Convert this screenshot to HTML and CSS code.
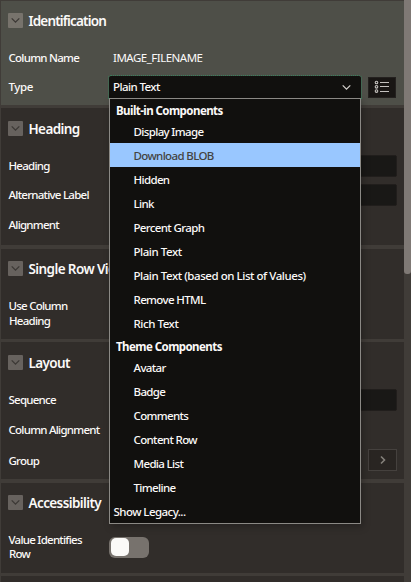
FILE: index.html
```
<!DOCTYPE html>
<html lang="en">
<head>
<meta charset="utf-8">
<title>Property Editor</title>
<link rel="stylesheet" href="styles.css">
</head>
<body>
<svg class="defs" aria-hidden="true"><symbol id="chev" viewBox="0 0 15 15"><path d="M3.7 5.4 7.5 9.2 11.3 5.4"/></symbol></svg>
<div class="panel">
  <main class="groups">
    <section class="group active identification">
      <h2><span class="toggle-icon"><svg><use href="#chev"/></svg></span><span class="t-ident">Identification</span></h2>
      <div class="row"><span class="label">Column Name</span><span class="value">IMAGE_FILENAME</span></div>
      <div class="row type-row"><span class="label">Type</span>
        <div class="select"><span>Plain Text</span><svg><use href="#chev"/></svg>
          <div class="menu">
            <div class="menu-head">Built-in Components</div>
            <div class="builtin">
              <div class="item">Display Image</div>
              <div class="item selected">Download BLOB</div>
              <div class="item">Hidden</div>
              <div class="item">Link</div>
              <div class="item">Percent Graph</div>
              <div class="item wide">Plain Text</div>
              <div class="item wide">Plain Text (based on List of Values)</div>
              <div class="item">Remove HTML</div>
              <div class="item wide">Rich Text</div>
            </div>
            <div class="menu-head theme">Theme Components</div>
            <div class="item">Avatar</div>
            <div class="item">Badge</div>
            <div class="item">Comments</div>
            <div class="item">Content Row</div>
            <div class="item">Media List</div>
            <div class="item">Timeline</div>
            <div class="item legacy">Show Legacy...</div>
          </div>
        </div>
        <button class="list-button" aria-label="Quick pick"><svg viewBox="0 0 16 14"><g class="dots"><circle cx="2.5" cy="2.5" r="1.3"/><circle cx="2.5" cy="6.8" r="1.3"/><circle cx="2.5" cy="11.1" r="1.3"/></g><path d="M6 2.5h9M6 6.5h9M6 11.5h9"/></svg></button>
      </div>
    </section>
    <section class="group heading">
      <h2><span class="toggle-icon"><svg><use href="#chev"/></svg></span><span>Heading</span></h2>
      <div class="row"><span class="label">Heading</span><span class="input"></span></div>
      <div class="row"><span class="label">Alternative Label</span><span class="input"></span></div>
      <div class="row low"><span class="label">Alignment</span></div>
    </section>
    <section class="group single">
      <h2><span class="toggle-icon"><svg><use href="#chev"/></svg></span><span>Single Row View</span></h2>
      <div class="two-line"><span class="label">Use Column<br>Heading</span></div>
    </section>
    <section class="group layout">
      <h2><span class="toggle-icon"><svg><use href="#chev"/></svg></span><span>Layout</span></h2>
      <div class="row"><span class="label">Sequence</span><span class="input"></span></div>
      <div class="row low"><span class="label">Column Alignment</span></div>
      <div class="row group-row"><span class="label">Group</span><button class="next-button" aria-label="Go to group"><svg viewBox="0 0 10 10"><path d="M3 1.5 6.5 5 3 8.5"/></svg></button></div>
    </section>
    <section class="group access">
      <h2><span class="toggle-icon"><svg><use href="#chev"/></svg></span><span>Accessibility</span></h2>
      <div class="two-line tight"><span class="label">Value Identifies<br>Row</span><span class="switch"><span class="knob"></span></span></div>
    </section>
    <section class="group last"></section>
  </main>
  <div class="scrollbar"><div class="thumb"></div></div>
</div>
</body>
</html>
```
FILE: styles.css
```
* { box-sizing: border-box; }
body { margin: 0; background: #fff; font-family: "Noto Sans", "Open Sans", sans-serif; font-size: 11.5px; letter-spacing: -0.5px; color: #fbf9f8; overflow: hidden; }
.defs { position: absolute; width: 0; height: 0; }
.panel { display: flex; width: 411px; height: 582px; overflow: hidden; background: #403c38; }
.groups { width: 404px; padding: 1px 0 0 1px; }
.group { background: #312d2a; padding: 0 7px 0 8px; overflow: hidden; }
.active { background: #4e4f48; overflow: visible; }
.identification { height: 104px; margin-bottom: 3px; }
.heading { height: 137px; margin-bottom: 4px; }
.single { height: 90px; margin-bottom: 3px; }
.layout { height: 137px; margin-bottom: 4px; }
.access { height: 90px; margin-bottom: 3px; }
.last { height: 6px; }
h2 { display: flex; align-items: center; gap: 5.5px; margin: 0 0 4px -1px; height: 39px; font-size: 13.5px; font-weight: 600; letter-spacing: -0.6px; white-space: nowrap; }
.t-ident { letter-spacing: -0.82px; }
.heading h2, .layout h2 { height: 40px; padding-top: 1px; }
.toggle-icon { width: 15px; height: 15px; background: #67625e; border-radius: 1px; display: flex; }
.active .toggle-icon { background: #77736c; }
.toggle-icon svg { width: 15px; height: 15px; fill: none; stroke: #3c3835; stroke-width: 1.3; }
.row { display: flex; align-items: center; height: 29px; padding-bottom: 1px; }
.low { padding: 1px 0 0; }
.label { width: 100px; flex: none; white-space: nowrap; letter-spacing: -0.75px; font-weight: 500; text-indent: -0.5px; margin-top: -1px; }
.type-row .label { letter-spacing: -0.4px; }
.value { padding-left: 4px; margin-top: -1px; }
.two-line { display: flex; padding-top: 7px; line-height: 15px; }
.tight { line-height: 14px; padding-top: 8px; }
.input { flex: 1; height: 22px; border: 1px solid #211e1c; border-radius: 2px; background: #191816; }
.select { position: relative; display: flex; align-items: center; justify-content: space-between; width: 252px; height: 22px; padding: 0 7px 0 4px; background: #11100e; border-radius: 2px 2px 0 0; outline: 1px dotted #38805c; outline-offset: 0; }
.select > span { margin-top: -1px; letter-spacing: -0.6px; font-weight: 500; }
.select > svg { width: 15px; height: 15px; fill: none; stroke: #d4d1cd; stroke-width: 1.2; }
.menu { position: absolute; z-index: 2; top: 22px; left: 0; width: 252px; height: 426px; border: 1px solid #8b8985; background: #11100e; box-shadow: 2px 3px 7px rgba(0,0,0,.25); }
.menu-head { height: 20px; padding: 2px 0 0 6px; line-height: 20px; font-weight: 700; letter-spacing: -0.56px; white-space: nowrap; }
.theme { height: 21px; }
.item { height: 24px; line-height: 24px; padding-left: 23.5px; letter-spacing: -0.64px; font-weight: 500; white-space: nowrap; }
.builtin .item { line-height: 26px; }
.wide { letter-spacing: -0.45px; }
.selected { background: #99c7ff; color: #44433f; }
.legacy { padding-left: 3.5px; letter-spacing: -0.55px; }
button { font: inherit; padding: 0; display: flex; align-items: center; justify-content: center; }
.list-button { width: 28px; height: 21px; margin-left: 7px; background: #191614; border: 1px solid #24211f; }
.list-button svg { width: 16px; height: 14px; fill: none; stroke: #c4c1be; stroke-width: 1.1; }
.next-button { width: 29px; height: 22px; margin-left: auto; background: #292522; border: 1px solid #45413e; }
.next-button svg { width: 10px; height: 10px; fill: none; stroke: #85807b; stroke-width: 1.6; }
.group-row { height: 31px; padding: 1px 0 0; }
.group-row .label { margin-top: 1px; }
.switch { display: flex; width: 40px; height: 21px; margin-top: 3px; border-radius: 6px; padding: 1px 2px; background: #77726d; }
.knob { width: 18px; height: 18px; background: #fbfaf8; border-radius: 5px; }
.scrollbar { width: 7px; height: 582px; background: #403c38; }
.thumb { height: 274px; background: #7f7975; border-radius: 0 0 3px 3px; }
```
